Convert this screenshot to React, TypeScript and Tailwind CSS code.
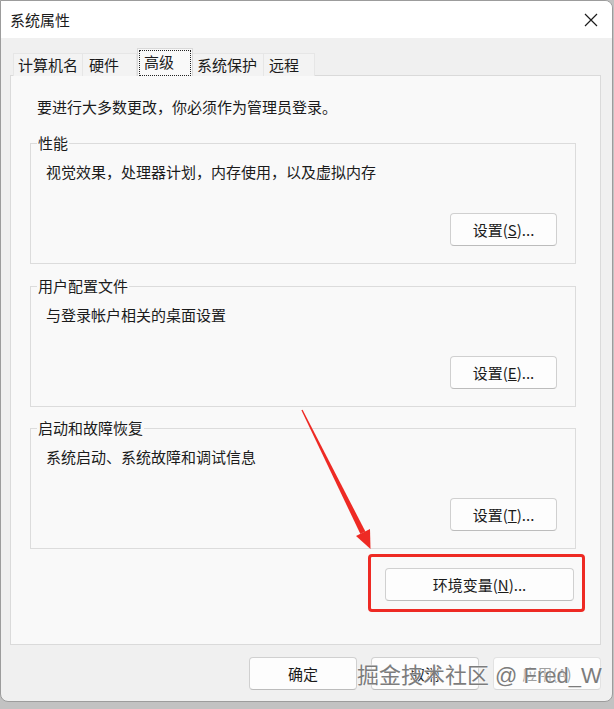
import type { ReactNode } from "react";

const btn =
  "flex h-[33px] items-center justify-center rounded-[4px] border border-[#d0d0d0] border-b-[#bcbcbc] bg-[#fdfdfd] text-[15px] leading-[20px] text-[#1b1b1b]";

function Group({ title, desc, button }: { title: string; desc: string; button: ReactNode }) {
  return (
    <fieldset className="ml-[19px] mr-[24px] border border-[#dcdcdc]">
      <legend className="ml-[6px] px-[1px] text-[15px] leading-[20px] text-[#1b1b1b]">{title}</legend>
      <div className="pl-[15px] pr-[18px] pb-[17px]">
        <p className="mt-[9px] text-[15px] leading-[20px] text-[#1b1b1b]">{desc}</p>
        <div className="mt-[31px] flex justify-end">{button}</div>
      </div>
    </fieldset>
  );
}

export default function App() {
  return (
    <div className="relative h-[709px] w-[614px] bg-[#c2c2c2] font-['Noto_Sans_CJK_SC',sans-serif]">
      <div className="flex h-[702px] w-[613px] flex-col overflow-hidden rounded-tr-[8px] rounded-b-[8px] border border-[#9c9c9c] bg-[#f0f0f0]">
        {/* title bar */}
        <div className="flex h-[37px] shrink-0 items-center justify-between bg-white pl-[9px] pr-[14px]">
          <span className="text-[15px] leading-[20px] text-[#1b1b1b]">系统属性</span>
          <svg width="14" height="14" viewBox="0 0 14 14" className="mt-[1px]">
            <path d="M1 1 L13 13 M13 1 L1 13" stroke="#1b1b1b" strokeWidth="1.2" fill="none" />
          </svg>
        </div>

        <div className="flex flex-1 flex-col pl-[9px] pr-[11px]">
          {/* tabs */}
          <div className="relative z-10 mt-[10px] -mb-px flex h-[28px] items-end pl-[3px] text-[15px] leading-[20px] text-[#1b1b1b]">
            <div className="flex h-[23px] w-[70px] items-center border border-b-0 border-[#e6e6e6] bg-[#f3f3f3] pl-[4px]">计算机名</div>
            <div className="flex h-[23px] w-[54px] items-center border border-b-0 border-l-0 border-[#e6e6e6] bg-[#f3f3f3] pl-[6px]">硬件</div>
            <div className="h-[28px] w-[56px] border border-b-0 border-[#d9d9d9] bg-[#f9f9f9] p-px">
              <div className="flex h-[26px] items-center border border-dotted border-[#222] pb-[2px] pl-[4px]">高级</div>
            </div>
            <div className="flex h-[23px] w-[71px] items-center border border-b-0 border-l-0 border-[#e6e6e6] bg-[#f3f3f3] pl-[4px]">系统保护</div>
            <div className="flex h-[23px] w-[51px] items-center border border-b-0 border-l-0 border-[#e6e6e6] bg-[#f3f3f3] pl-[5px]">远程</div>
          </div>

          {/* panel */}
          <div className="h-[570px] w-[591px] border border-[#dadada] bg-[#f9f9f9] pt-[21px]">
            <p className="ml-[26px] text-[15px] leading-[20px] text-[#1b1b1b]">要进行大多数更改，你必须作为管理员登录。</p>
            <div className="mt-[16px]">
              <Group
                title="性能"
                desc="视觉效果，处理器计划，内存使用，以及虚拟内存"
                button={
                  <button className={`${btn} w-[107px] border-[#0f6cbd] border-b-[#0f6cbd]`}>
                    设置(<u>S</u>)...
                  </button>
                }
              />
            </div>
            <div className="mt-[12px]">
              <Group
                title="用户配置文件"
                desc="与登录帐户相关的桌面设置"
                button={
                  <button className={`${btn} w-[107px]`}>
                    设置(<u>E</u>)...
                  </button>
                }
              />
            </div>
            <div className="mt-[11px]">
              <Group
                title="启动和故障恢复"
                desc="系统启动、系统故障和调试信息"
                button={
                  <button className={`${btn} w-[107px]`}>
                    设置(<u>T</u>)...
                  </button>
                }
              />
            </div>
            <div className="mt-[19px] flex justify-end pr-[26px]">
              <button className={`${btn} w-[189px]`}>
                环境变量(<u>N</u>)...
              </button>
            </div>
          </div>

          {/* dialog buttons */}
          <div className="mt-[12px] flex justify-end gap-[14px]">
            <button className={`${btn} w-[108px]`}>确定</button>
            <button className={`${btn} w-[108px]`}>取消</button>
            <button className={`${btn} w-[108px] border-[#e2e2e2] border-b-[#d6d6d6] bg-[#fbfbfb] text-[#a0a0a0]`}>
              应用(<u>A</u>)
            </button>
          </div>
        </div>
      </div>

      {/* annotation: red highlight box */}
      <div className="absolute left-[368px] top-[554px] h-[58px] w-[217px] rounded-[4px] border-[3px] border-[#ee2a24]" />

      {/* annotation: red arrow */}
      <svg className="pointer-events-none absolute left-0 top-0" width="614" height="709" viewBox="0 0 614 709">
        <polygon points="302.6,409.7 301.4,410.3 360.4,534 365.4,531.5" fill="#ee2a24" />
        <polygon points="370.5,549 356,536 370,529" fill="#ee2a24" />
      </svg>

      {/* watermark */}
      <div className="pointer-events-none absolute left-[357px] top-[661px] whitespace-nowrap font-['Liberation_Sans','Noto_Sans_CJK_SC',sans-serif] text-[22px] leading-[30px] text-[#7c7c7c] [text-shadow:0_0_2px_#fff,0_0_1px_#fff,0_0_1px_#fff]">
        掘金技术社区 @ Fred_W
      </div>
    </div>
  );
}
